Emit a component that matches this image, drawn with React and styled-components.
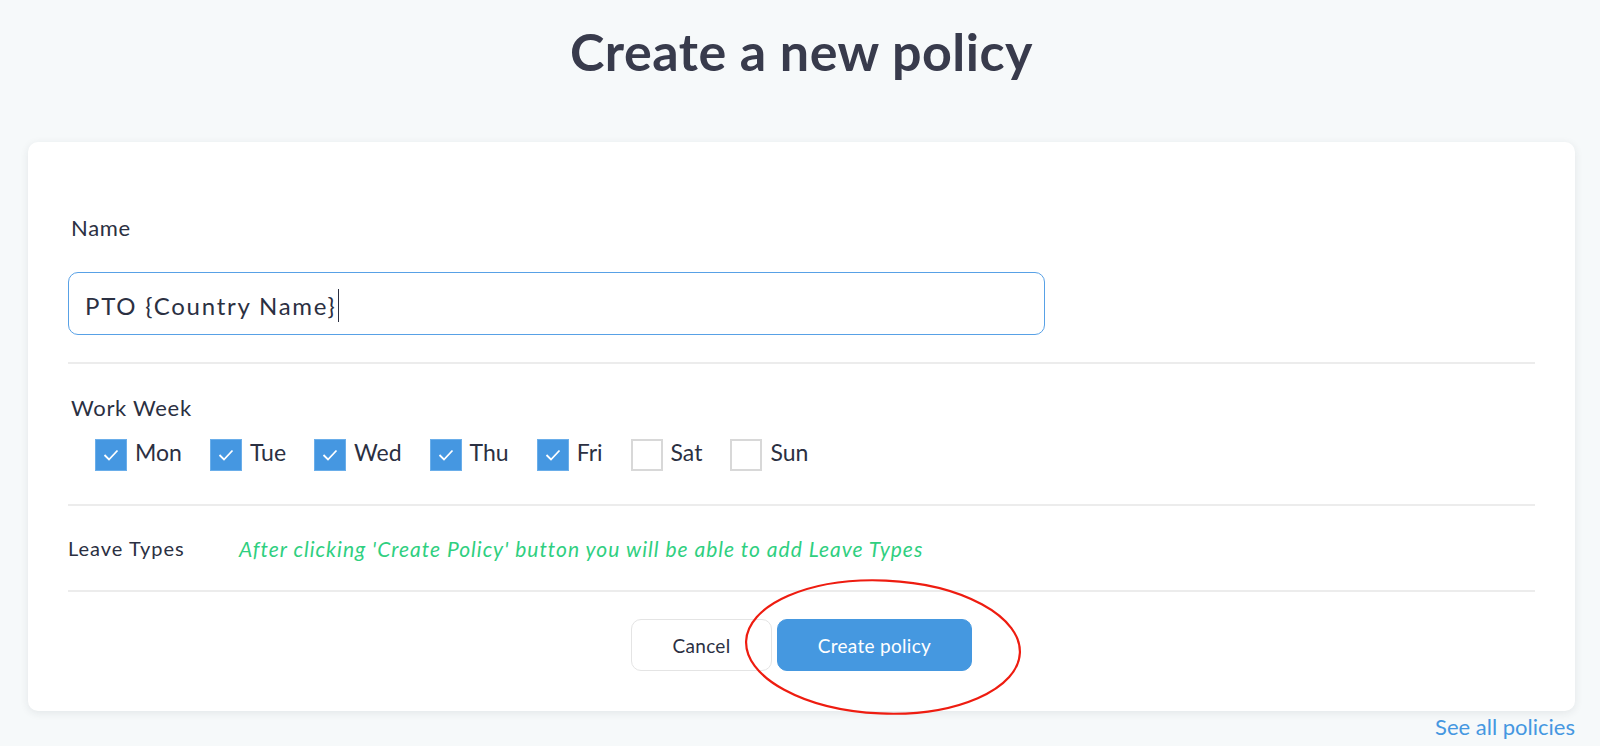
import React from 'react';
import styled, { createGlobalStyle } from 'styled-components';

const GlobalStyle = createGlobalStyle`
  html, body {
    margin: 0;
    padding: 0;
    background: #f6f9fa;
    font-family: Lato, "Open Sans", sans-serif;
    color: #2b3042;
  }
`;

const Page = styled.div`
  padding: 21px 25px 0 28px;
`;

const Title = styled.h1`
  margin: 0 0 61px;
  text-align: center;
  font-size: 52px;
  line-height: 60px;
  font-weight: 700;
  letter-spacing: 0.5px;
  color: #383b4c;
`;

const Card = styled.div`
  background: #fff;
  border-radius: 10px;
  box-shadow: 0 2px 8px rgba(30, 40, 60, 0.09);
  padding: 74px 40px 40px;
`;

const Label = styled.div`
  font-size: 22px;
  line-height: 24px;
  letter-spacing: 0.7px;
  padding-left: 3px;
  margin-top: ${p => p.$top || 0}px;
`;

const Field = styled.div`
  margin-top: 32px;
  width: 977px;
  height: 63px;
  box-sizing: border-box;
  border: 1px solid #58a1e6;
  border-radius: 10px;
  display: flex;
  align-items: center;
  padding: 3px 16px 0;
  font-size: 24px;
  letter-spacing: 1.75px;
  color: #2b3042;
`;

const Caret = styled.span`
  display: inline-block;
  width: 1.5px;
  height: 33px;
  margin-left: 1px;
  background: #2b3042;
`;

const Divider = styled.hr`
  border: none;
  height: 2px;
  background: #ececec;
  margin: ${p => p.$top}px 0 0;
`;

const WeekRow = styled.div`
  display: flex;
  margin-top: 19px;
  padding-left: 27px;
`;

const Day = styled.label`
  display: flex;
  align-items: flex-start;
  margin-right: 28px;
`;

const Box = styled.span`
  width: 32px;
  height: 32px;
  box-sizing: border-box;
  display: flex;
  align-items: center;
  justify-content: center;
  background: ${p => (p.$checked ? '#4597e1' : '#fff')};
  border-style: solid;
  border-color: ${p => (p.$checked ? '#6aaeea' : '#d8d8d8')};
  border-width: ${p => (p.$checked ? '1px' : '2px')};
`;

const DayText = styled.span`
  margin-left: 8px;
  font-size: 23px;
  line-height: 26px;
`;

const LeaveRow = styled.div`
  display: flex;
  align-items: center;
  height: 84px;
`;

const LeaveLabel = styled.div`
  width: 171px;
  font-size: 20px;
  letter-spacing: 1px;
`;

const Hint = styled.div`
  font-size: 21px;
  font-style: italic;
  letter-spacing: 1px;
  color: #2fcf80;
`;

const ButtonRow = styled.div`
  position: relative;
  display: flex;
  justify-content: center;
  gap: 5px;
  margin-top: 27px;
`;

const Button = styled.button`
  height: 52px;
  width: ${p => p.$width}px;
  border-radius: 10px;
  font-family: inherit;
  font-size: 19px;
  letter-spacing: 0.3px;
  cursor: pointer;
  border: 1px solid ${p => (p.$primary ? '#4598e0' : '#e4e4e4')};
  background: ${p => (p.$primary ? '#4598e0' : '#fff')};
  color: ${p => (p.$primary ? '#fff' : '#2b3042')};
`;

const Circle = styled.svg`
  position: absolute;
  left: 675px;
  top: -42px;
  pointer-events: none;
`;

const Footer = styled.div`
  display: flex;
  justify-content: flex-end;
  margin-top: 4px;
`;

const Link = styled.a`
  font-size: 22px;
  line-height: 24px;
  color: #4597e1;
  text-decoration: none;
`;

const days = [
  ['Mon', true],
  ['Tue', true],
  ['Wed', true],
  ['Thu', true],
  ['Fri', true],
  ['Sat', false],
  ['Sun', false],
];

const Check = () => (
  <svg width="16" height="12" viewBox="0 0 16 12">
    <polyline points="1.5,6 6,10.5 14.5,1.5" fill="none" stroke="#fff" strokeWidth="1.8" />
  </svg>
);

export default function App() {
  return (
    <Page>
      <GlobalStyle />
      <Title>Create a new policy</Title>
      <Card>
        <Label>Name</Label>
        <Field>
          PTO {'{'}Country Name{'}'}
          <Caret />
        </Field>
        <Divider $top={27} />
        <Label $top={32}>Work Week</Label>
        <WeekRow>
          {days.map(([name, checked]) => (
            <Day key={name}>
              <Box $checked={checked}>{checked && <Check />}</Box>
              <DayText>{name}</DayText>
            </Day>
          ))}
        </WeekRow>
        <Divider $top={33} />
        <LeaveRow>
          <LeaveLabel>Leave Types</LeaveLabel>
          <Hint>After clicking 'Create Policy' button you will be able to add Leave Types</Hint>
        </LeaveRow>
        <Divider $top={0} />
        <ButtonRow>
          <Button $width={141}>Cancel</Button>
          <Button $primary $width={195}>Create policy</Button>
          <Circle width="280" height="140" viewBox="0 0 280 140">
            <ellipse cx="140" cy="70" rx="137" ry="66.5" fill="none" stroke="#ee1c10" strokeWidth="2.2" transform="rotate(2.5 140 70)" />
          </Circle>
        </ButtonRow>
      </Card>
      <Footer>
        <Link href="#">See all policies</Link>
      </Footer>
    </Page>
  );
}
